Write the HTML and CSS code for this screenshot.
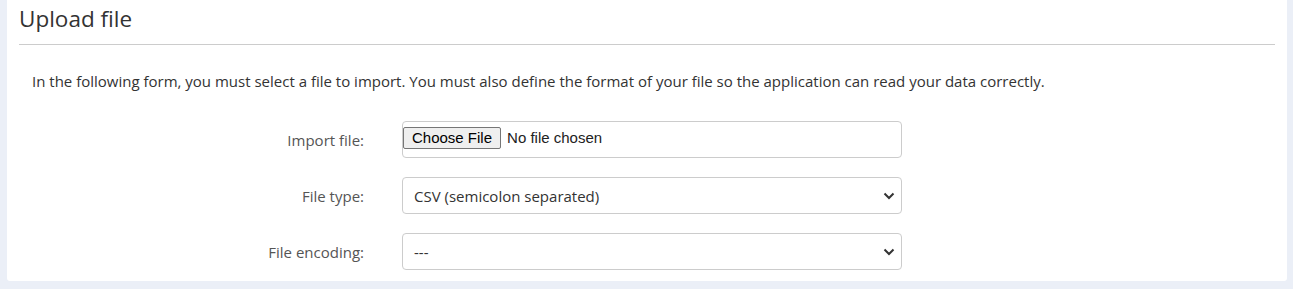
FILE: index.html
```html
<!DOCTYPE html>
<html lang="en">
<head>
<meta charset="utf-8">
<title>Upload file</title>
<link rel="stylesheet" href="styles.css">
</head>
<body>
<div class="card">
  <div class="card-header">
    <h2 class="card-title">Upload file</h2>
  </div>
  <div class="card-body">
    <p class="intro">In the following form, you must select a file to import. You must also define the format of your file so the application can read your data correctly.</p>
    <form class="form">
      <div class="form-row">
        <label class="form-label" for="import-file">Import file:</label>
        <div class="control file-control">
          <input type="file" id="import-file" class="file-input">
        </div>
      </div>
      <div class="form-row">
        <label class="form-label" for="file-type">File type:</label>
        <div class="control select-wrap">
          <select id="file-type" class="select">
            <option>CSV (semicolon separated)</option>
            <option>CSV (comma separated)</option>
          </select>
          <svg class="chevron" width="12" height="8" viewBox="0 0 12 8" aria-hidden="true"><path d="M1.5 1.5 L6 6 L10.5 1.5" fill="none" stroke="#333" stroke-width="2"/></svg>
        </div>
      </div>
      <div class="form-row">
        <label class="form-label" for="file-encoding">File encoding:</label>
        <div class="control select-wrap">
          <select id="file-encoding" class="select">
            <option>---</option>
          </select>
          <svg class="chevron" width="12" height="8" viewBox="0 0 12 8" aria-hidden="true"><path d="M1.5 1.5 L6 6 L10.5 1.5" fill="none" stroke="#333" stroke-width="2"/></svg>
        </div>
      </div>
    </form>
  </div>
</div>
</body>
</html>
```
FILE: styles.css
```css
html, body {
  margin: 0;
  padding: 0;
}
body {
  background: #ebeff7;
  padding: 0 6px 7px 7px;
  font-family: "Open Sans", "Liberation Sans", sans-serif;
  color: #333;
}
.card {
  background: #fff;
  border-radius: 0 0 3px 3px;
  padding-bottom: 11px;
}
.card-header {
  margin: 0 12px;
  padding-top: 3px;
  padding-bottom: 9px;
  border-bottom: 1px solid #cccccc;
}
.card-title {
  margin: 0;
  font-size: 22.5px;
  line-height: 32px;
  font-weight: 400;
  color: #333;
}
.card-body {
  padding: 26px 25px 0 25px;
}
.intro {
  margin: 0;
  font-size: 15px;
  line-height: 20px;
  color: #333;
}
.form {
  margin-top: 30px;
  display: flex;
  flex-direction: column;
  gap: 19px;
}
.form-row {
  display: flex;
  align-items: center;
}
.form-label {
  width: 332px;
  margin-right: 38px;
  text-align: right;
  font-size: 15px;
  line-height: 20px;
  color: #555;
}
.control {
  width: 500px;
  height: 37px;
  box-sizing: border-box;
  border: 1px solid #cccccc;
  border-radius: 4px;
  background: #fff;
}
.file-control {
  display: flex;
  align-items: center;
  padding-bottom: 3px;
}
.file-input {
  font-family: "Liberation Sans", Arial, sans-serif;
  font-size: 15px;
  color: #222;
  margin: 0;
  padding: 0;
  width: 100%;
}
.file-input::file-selector-button {
  font-family: "Liberation Sans", Arial, sans-serif;
  font-size: 15px;
  line-height: 18px;
  color: #000;
  background: #efefef;
  border: 1px solid #767676;
  border-radius: 2px;
  padding: 1px 8px;
  margin: 0 6px 0 0;
}
.select-wrap {
  position: relative;
}
.select {
  appearance: none;
  -webkit-appearance: none;
  width: 100%;
  height: 100%;
  border: 0;
  background: transparent;
  margin: 0;
  padding: 0 30px 0 11px;
  font-family: "Open Sans", "Liberation Sans", sans-serif;
  font-size: 15px;
  color: #333;
  outline: none;
}
.chevron {
  position: absolute;
  right: 6px;
  top: 14px;
  pointer-events: none;
}
```
